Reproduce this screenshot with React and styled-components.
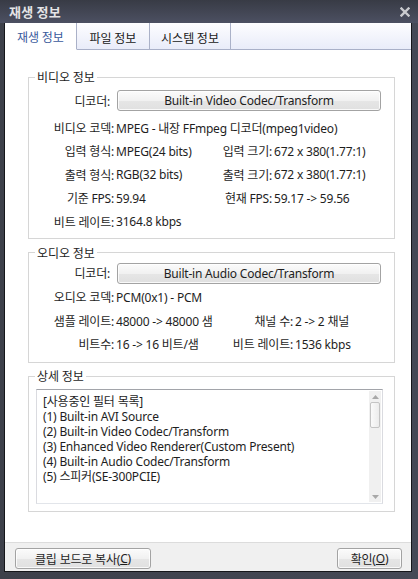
import React from "react";
import styled, { createGlobalStyle, css } from "styled-components";

const GlobalStyle = createGlobalStyle`
  html, body { margin: 0; padding: 0; background: #3b3e48; }
  body {
    font-family: "Noto Sans", "Noto Sans CJK KR", sans-serif;
    font-size: 12px;
    letter-spacing: -0.2px;
    color: #1e1e1e;
  }
  * { box-sizing: border-box; }
`;

const Window = styled.div`
  width: 418px;
  height: 579px;
  display: flex;
  flex-direction: column;
  background: #3a3d47;
`;

const TitleBar = styled.div`
  height: 23px;
  flex: none;
  display: flex;
  align-items: center;
  justify-content: space-between;
  padding: 0 8px 0 9px;
  background: linear-gradient(#383b45, #4c5062);
`;

const Title = styled.div`
  font-family: "Noto Sans CJK KR", sans-serif;
  font-weight: 700;
  font-size: 13px;
  color: #e4e4e6;
  letter-spacing: 0.2px;
`;

const Frame = styled.div`
  flex: 1;
  display: flex;
  padding: 0 6px 7px 4px;
  background: linear-gradient(90deg, #3d404a, #454956);
`;

const Client = styled.div`
  flex: 1;
  display: flex;
  flex-direction: column;
  background: #fff;
  border: 1px solid #15161a;
  border-top: none;
`;

const TabBar = styled.div`
  height: 27px;
  flex: none;
  display: flex;
  background: linear-gradient(#fdfdff, #e9ecf9);
  border-bottom: 1px solid #a9b0c8;
`;

const Tab = styled.div`
  width: ${(p) => p.$w}px;
  height: 27px;
  display: flex;
  align-items: center;
  justify-content: center;
  padding-top: 1px;
  border-right: 1px solid #aab1c8;
  font-family: "Noto Sans CJK KR", sans-serif;
  font-size: 12px;
  letter-spacing: 0;
  color: #202020;
  ${(p) =>
    p.$active &&
    css`
      background: #fff;
      color: #3a5a9c;
      border-bottom: 1px solid #fff;
    `}
`;

const Content = styled.div`
  flex: 1;
  display: flex;
  flex-direction: column;
  padding: 19px 16px 0 23px;
`;

const Group = styled.fieldset`
  margin: ${(p) => p.$mt || 0}px 0 0 0;
  padding: ${(p) => p.$pt}px 0 ${(p) => p.$pb}px 0;
  border: 1px solid #d6d6d6;
  min-width: 0;
`;

const Legend = styled.legend`
  margin-left: 6px;
  padding: 0 2px;
  line-height: 16px;
  font-family: "Noto Sans CJK KR", sans-serif;
  font-size: 12px;
  letter-spacing: 0;
  color: #1e1e1e;
`;

const DecoderRow = styled.div`
  display: grid;
  grid-template-columns: 85px 1fr;
  align-items: center;
  height: 21px;
`;

const Label = styled.div`
  text-align: right;
  white-space: nowrap;
  padding-right: ${(p) => p.$pr || 0}px;
`;

const Value = styled.div`
  white-space: nowrap;
  padding-left: 2px;
  grid-column: ${(p) => p.$span || "auto"};
`;

const Rows = styled.div`
  margin-top: ${(p) => p.$mt}px;
  display: flex;
  flex-direction: column;
`;

const Row = styled.div`
  display: grid;
  grid-template-columns: ${(p) => p.$cols};
  align-items: center;
  height: 23.5px;
`;

const Button = styled.div`
  height: 21px;
  display: flex;
  align-items: center;
  justify-content: center;
  border: 1px solid #a3a3a3;
  border-radius: 3px;
  background: linear-gradient(#fbfbfb 0%, #f1f1f1 50%, #e6e6e6 51%, #e0e0e0 100%);
  box-shadow: inset 0 0 0 1px rgba(255, 255, 255, 0.8);
  white-space: nowrap;
  color: #1e1e1e;
  width: ${(p) => (p.$w ? `${p.$w}px` : "auto")};
  margin: ${(p) => p.$m || 0};
`;

const U = styled.span`
  text-decoration: underline;
`;

const ListBox = styled.div`
  margin: 0 11px 0 7px;
  height: 115px;
  display: flex;
  border: 1px solid;
  border-color: #a2a4aa #dadbe0 #e2e5ea #dadbe0;
`;

const ListText = styled.div`
  flex: 1;
  padding: 4px 0 0 6px;
  line-height: 15px;
  white-space: nowrap;
  overflow: hidden;
`;

const ListLine = styled.div`
  height: 15px;
`;

const ScrollBar = styled.div`
  width: 12px;
  margin: 1px 1px 1px 0;
  display: flex;
  flex-direction: column;
  background: #f0f0f0;
`;

const ArrowBox = styled.div`
  height: 11px;
  display: flex;
  align-items: center;
  justify-content: center;
`;

const Thumb = styled.div`
  height: 26px;
  margin: 0 1px;
  border: 1px solid #c4c4c4;
  border-radius: 2px;
  background: linear-gradient(90deg, #fafafa, #ececec);
`;

const Track = styled.div`
  flex: 1;
`;

const Footer = styled.div`
  height: 29px;
  flex: none;
  display: flex;
  justify-content: space-between;
  align-items: flex-start;
  padding: 5px 9px 0 10px;
  background: #f0f0f0;
  border-top: 1px solid #dcdcdc;
`;

const Arrow = ({ up }) => (
  <svg width="7" height="4" viewBox="0 0 7 4">
    <path d={up ? "M0 4 L3.5 0 L7 4 Z" : "M0 0 L3.5 4 L7 0 Z"} fill="#a8a8a8" />
  </svg>
);

const CloseIcon = () => (
  <svg width="10" height="10" viewBox="0 0 10 10">
    <path d="M1.5 1.5 L8.5 8.5 M8.5 1.5 L1.5 8.5" stroke="#c9cace" strokeWidth="2.4" strokeLinecap="square" />
  </svg>
);

const VCOLS = "85px 97px 61px 1fr";
const ACOLS = "85px 112px 67px 1fr";

const filters = [
  "[사용중인 필터 목록]",
  "(1) Built-in AVI Source",
  "(2) Built-in Video Codec/Transform",
  "(3) Enhanced Video Renderer(Custom Present)",
  "(4) Built-in Audio Codec/Transform",
  "(5) 스피커(SE-300PCIE)",
];

export default function App() {
  return (
    <>
      <GlobalStyle />
      <Window>
        <TitleBar>
          <Title>재생 정보</Title>
          <CloseIcon />
        </TitleBar>
        <Frame>
          <Client>
            <TabBar>
              <Tab $w={72} $active>재생 정보</Tab>
              <Tab $w={73}>파일 정보</Tab>
              <Tab $w={81}>시스템 정보</Tab>
            </TabBar>
            <Content>
              <Group $pt={5} $pb={4}>
                <Legend>비디오 정보</Legend>
                <DecoderRow>
                  <Label $pr={4}>디코더:</Label>
                  <Button $m="0 13px 0 3px">Built-in Video Codec/Transform</Button>
                </DecoderRow>
                <Rows $mt={5}>
                  <Row $cols={VCOLS}>
                    <Label>비디오 코덱:</Label>
                    <Value $span="2 / 5">MPEG - 내장 FFmpeg 디코더(mpeg1video)</Value>
                  </Row>
                  <Row $cols={VCOLS}>
                    <Label>입력 형식:</Label>
                    <Value>MPEG(24 bits)</Value>
                    <Label>입력 크기:</Label>
                    <Value>672 x 380(1.77:1)</Value>
                  </Row>
                  <Row $cols={VCOLS}>
                    <Label>출력 형식:</Label>
                    <Value>RGB(32 bits)</Value>
                    <Label>출력 크기:</Label>
                    <Value>672 x 380(1.77:1)</Value>
                  </Row>
                  <Row $cols={VCOLS}>
                    <Label>기준 FPS:</Label>
                    <Value>59.94</Value>
                    <Label>현재 FPS:</Label>
                    <Value>59.17 -&gt; 59.56</Value>
                  </Row>
                  <Row $cols={VCOLS}>
                    <Label>비트 레이트:</Label>
                    <Value>3164.8 kbps</Value>
                  </Row>
                </Rows>
              </Group>

              <Group $mt={6} $pt={2} $pb={6}>
                <Legend>오디오 정보</Legend>
                <DecoderRow>
                  <Label $pr={4}>디코더:</Label>
                  <Button $m="0 13px 0 3px">Built-in Audio Codec/Transform</Button>
                </DecoderRow>
                <Rows $mt={2}>
                  <Row $cols={ACOLS}>
                    <Label>오디오 코덱:</Label>
                    <Value $span="2 / 5">PCM(0x1) - PCM</Value>
                  </Row>
                  <Row $cols={ACOLS}>
                    <Label>샘플 레이트:</Label>
                    <Value>48000 -&gt; 48000 샘</Value>
                    <Label>채널 수:</Label>
                    <Value>2 -&gt; 2 채널</Value>
                  </Row>
                  <Row $cols={ACOLS}>
                    <Label>비트수:</Label>
                    <Value>16 -&gt; 16 비트/샘</Value>
                    <Label>비트 레이트:</Label>
                    <Value>1536 kbps</Value>
                  </Row>
                </Rows>
              </Group>

              <Group $mt={5} $pt={5} $pb={7}>
                <Legend>상세 정보</Legend>
                <ListBox>
                  <ListText>
                    {filters.map((f) => (
                      <ListLine key={f}>{f}</ListLine>
                    ))}
                  </ListText>
                  <ScrollBar>
                    <ArrowBox>
                      <Arrow up />
                    </ArrowBox>
                    <Thumb />
                    <Track />
                    <ArrowBox>
                      <Arrow />
                    </ArrowBox>
                  </ScrollBar>
                </ListBox>
              </Group>
            </Content>
            <Footer>
              <Button $w={136}>
                클립 보드로 복사(<U>C</U>)
              </Button>
              <Button $w={65}>
                확인(<U>O</U>)
              </Button>
            </Footer>
          </Client>
        </Frame>
      </Window>
    </>
  );
}
